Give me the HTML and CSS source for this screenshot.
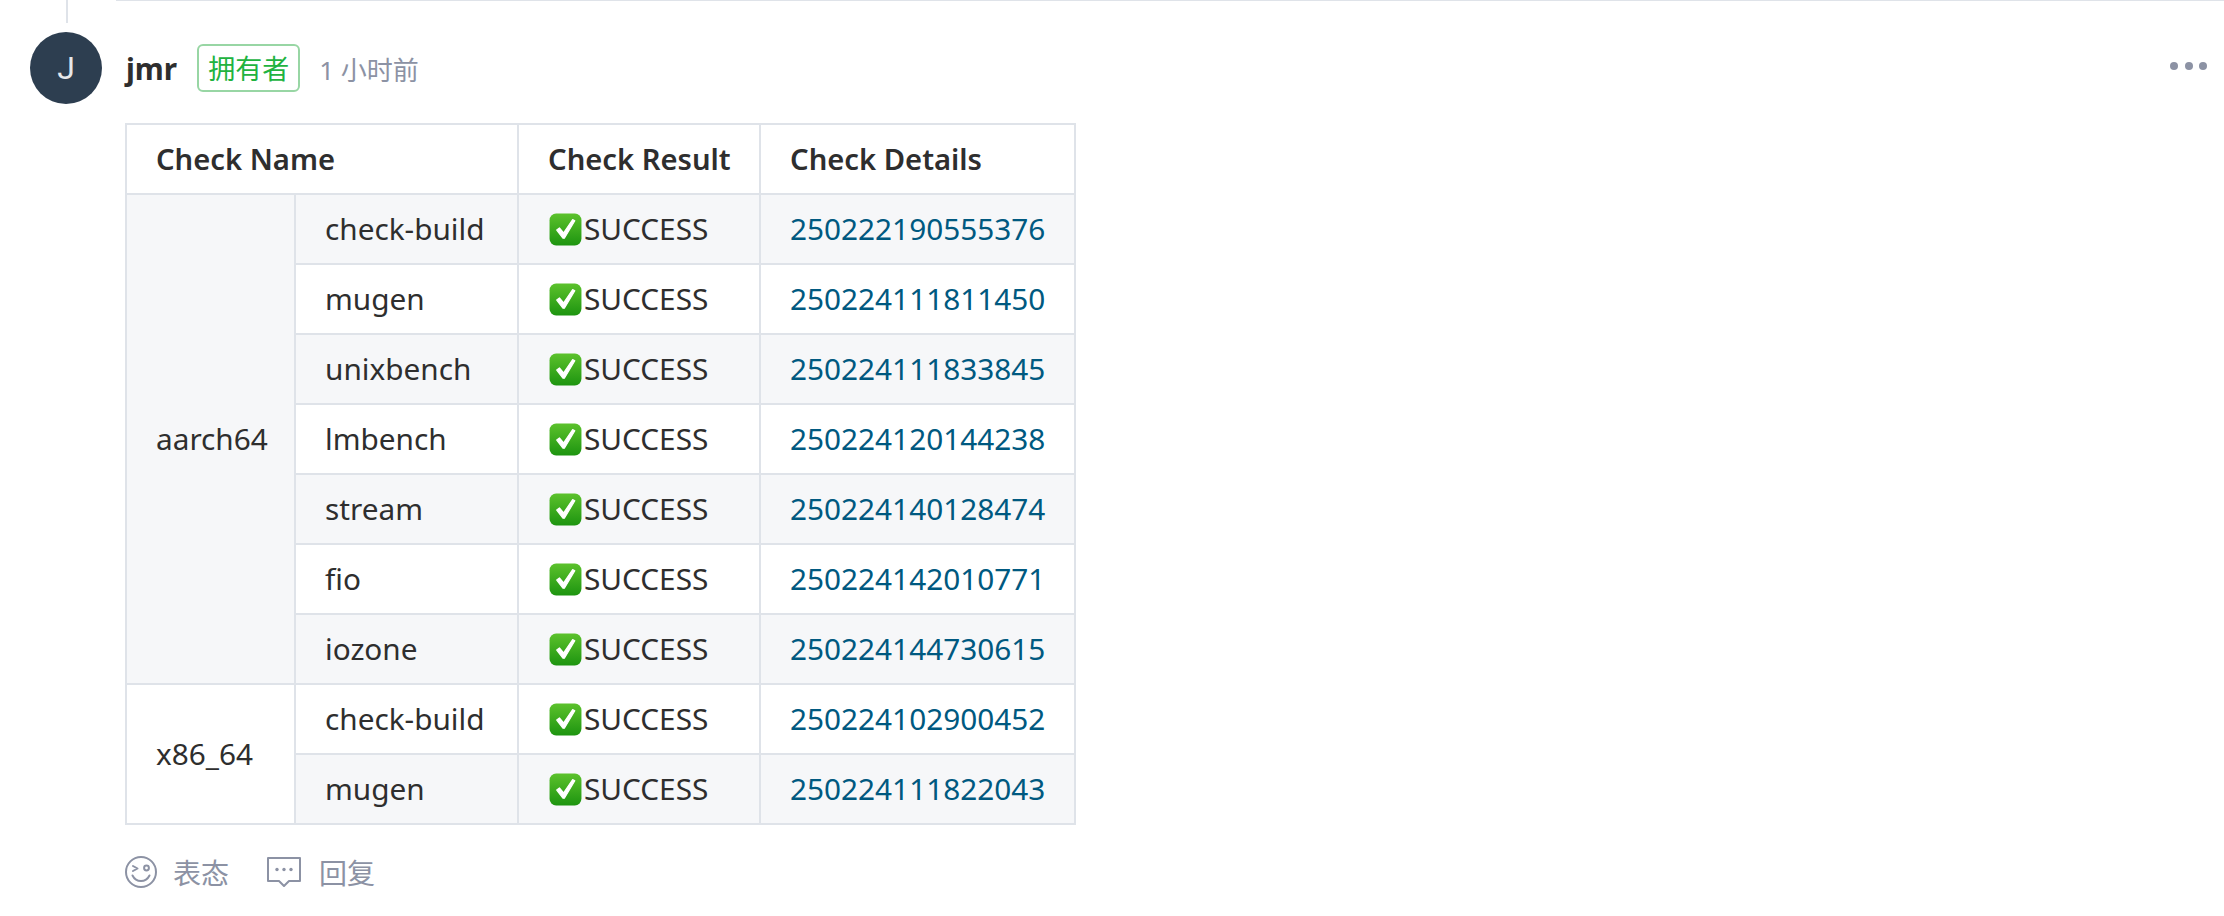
FILE: index.html
```html
<!DOCTYPE html>
<html lang="zh">
<head>
<meta charset="utf-8">
<title>Comment</title>
<link rel="stylesheet" href="styles.css">
</head>
<body>
<svg class="defs" width="0" height="0" aria-hidden="true">
  <defs>
    <linearGradient id="g" x1="0" y1="0" x2="0" y2="1">
      <stop offset="0" stop-color="#5cc22c"/><stop offset="1" stop-color="#1d9410"/>
    </linearGradient>
    <symbol id="ok" viewBox="0 0 30 30">
      <rect x="0.5" y="0.5" width="29" height="29" rx="6" fill="url(#g)"/>
      <path d="M7 15.500l5.800 7.500h1.200L23.500 7l-2-1-8.200 12-3.800-4.500z" fill="#fff" stroke="#fff" stroke-width="1" stroke-linejoin="round"/>
    </symbol>
  </defs>
</svg>
<div class="thread-top">
  <div class="stem"></div>
  <div class="rule"></div>
</div>
<article class="comment">
  <div class="avatar">J</div>
  <div class="main">
    <header class="head">
      <span class="name">jmr</span>
      <span class="badge">拥有者</span>
      <span class="time">1 小时前</span>
      <span class="more"><i></i><i></i><i></i></span>
    </header>
    <table class="checks">
      <colgroup><col class="c1"><col class="c2"><col class="c3"><col class="c4"></colgroup>
      <thead>
        <tr><th colspan="2">Check Name</th><th>Check Result</th><th>Check Details</th></tr>
      </thead>
      <tbody>
        <tr><td rowspan="7" class="arch">aarch64</td><td>check-build</td><td><svg class="ok"><use href="#ok"/></svg>SUCCESS</td><td><a href="#">250222190555376</a></td></tr>
        <tr><td>mugen</td><td><svg class="ok"><use href="#ok"/></svg>SUCCESS</td><td><a href="#">250224111811450</a></td></tr>
        <tr><td>unixbench</td><td><svg class="ok"><use href="#ok"/></svg>SUCCESS</td><td><a href="#">250224111833845</a></td></tr>
        <tr><td>lmbench</td><td><svg class="ok"><use href="#ok"/></svg>SUCCESS</td><td><a href="#">250224120144238</a></td></tr>
        <tr><td>stream</td><td><svg class="ok"><use href="#ok"/></svg>SUCCESS</td><td><a href="#">250224140128474</a></td></tr>
        <tr><td>fio</td><td><svg class="ok"><use href="#ok"/></svg>SUCCESS</td><td><a href="#">250224142010771</a></td></tr>
        <tr><td>iozone</td><td><svg class="ok"><use href="#ok"/></svg>SUCCESS</td><td><a href="#">250224144730615</a></td></tr>
        <tr><td rowspan="2" class="arch">x86_64</td><td>check-build</td><td><svg class="ok"><use href="#ok"/></svg>SUCCESS</td><td><a href="#">250224102900452</a></td></tr>
        <tr><td>mugen</td><td><svg class="ok"><use href="#ok"/></svg>SUCCESS</td><td><a href="#">250224111822043</a></td></tr>
      </tbody>
    </table>
    <footer class="actions">
      <span class="action react">
        <svg class="ico-smile" viewBox="0 0 32 32" fill="none" stroke="#8c92a4" stroke-width="2" stroke-linecap="round" stroke-linejoin="round">
          <circle cx="16" cy="16" r="15"/>
          <path d="M8 10l4.500 2.500L8 15"/>
          <circle cx="21.500" cy="12" r="2.400"/>
          <path d="M7.500 19.500c2 4 5 5.500 8.500 5.500s6.500-1.500 8.500-5.500"/>
        </svg>
        <span>表态</span>
      </span>
      <span class="action reply">
        <svg class="ico-reply" viewBox="0 0 34 30" fill="none" stroke="#8c92a4" stroke-width="2">
          <path d="M1 1h32v23H22l-5 5-5-5H1z" stroke-linejoin="round"/>
          <circle cx="10" cy="12.500" r="1.700" fill="#8c92a4" stroke="none"/>
          <circle cx="17" cy="12.500" r="1.700" fill="#8c92a4" stroke="none"/>
          <circle cx="24" cy="12.500" r="1.700" fill="#8c92a4" stroke="none"/>
        </svg>
        <span>回复</span>
      </span>
    </footer>
  </div>
</article>
</body>
</html>
```
FILE: styles.css
```css
* { box-sizing: border-box; }
html, body { margin: 0; padding: 0; background: #fff; }
body {
  width: 2224px;
  height: 916px;
  overflow: hidden;
  font-family: "Noto Sans", "Noto Sans CJK SC", sans-serif;
  color: #2e2e2e;
}
.defs { position: absolute; }
.thread-top { display: flex; height: 32px; }
.stem { width: 2px; height: 23px; margin-left: 66px; background: #dfe3e9; }
.rule { width: 2108px; height: 1px; margin-left: 48px; background: #dfe3e9; }
.comment { display: flex; padding-left: 30px; }
.avatar {
  flex: none;
  width: 72px;
  height: 72px;
  border-radius: 50%;
  background: #2d3e50;
  color: #e6e8ea;
  font: 400 32px/72px Roboto, sans-serif;
  text-align: center;
}
.main { flex: 1; margin-left: 23px; min-width: 0; }
.head { display: flex; align-items: center; height: 48px; margin-top: 12px; padding: 0 17px 0 1px; }
.name { font-size: 29.750px; font-weight: 700; line-height: 40px; color: #2e2e2e; margin-right: 20px; position: relative; top: 1px; }
.badge {
  height: 48px;
  padding: 0 9px;
  border: 2px solid #98d6a4;
  border-radius: 6px;
  color: #21b33f;
  font: 400 27px/44px "Noto Sans CJK SC", sans-serif;
  margin-right: 19px;
}
.time { font: 400 26px/36px "Noto Sans", "Noto Sans CJK SC", sans-serif; color: #8c92a4; position: relative; top: 2px; }
.more { display: flex; gap: 6.500px; margin-left: auto; position: relative; top: -2px; }
.more i { width: 8px; height: 8px; border-radius: 50%; background: #8c92a4; }
.checks {
  border-collapse: collapse;
  margin-top: 31px;
  font-size: 29.750px;
  table-layout: fixed;
  width: 949px;
}
.c1 { width: 169px; }
.c2 { width: 223px; }
.c3 { width: 242px; }
.c4 { width: 315px; }
.checks th, .checks td {
  height: 70px;
  padding: 0 29px;
  border: 2px solid #dfe3e9;
  text-align: left;
  white-space: nowrap;
  line-height: 40px;
}
.checks th { font-weight: 600; font-size: 29.200px; }
.checks tbody tr:nth-child(odd) td { background: #f6f7f9; }
.checks a { color: #005980; text-decoration: none; }
.ok { width: 33px; height: 33px; vertical-align: -6px; margin: 0 2px 0 1px; }
.actions { display: flex; align-items: center; gap: 38px; margin-top: 29px; color: #8c92a4; font: 400 28px/36px "Noto Sans CJK SC", sans-serif; }
.action { display: flex; align-items: center; }
.ico-smile { width: 32px; height: 32px; margin-right: 16px; }
.ico-reply { width: 34px; height: 30px; margin-right: 18px; }
```
